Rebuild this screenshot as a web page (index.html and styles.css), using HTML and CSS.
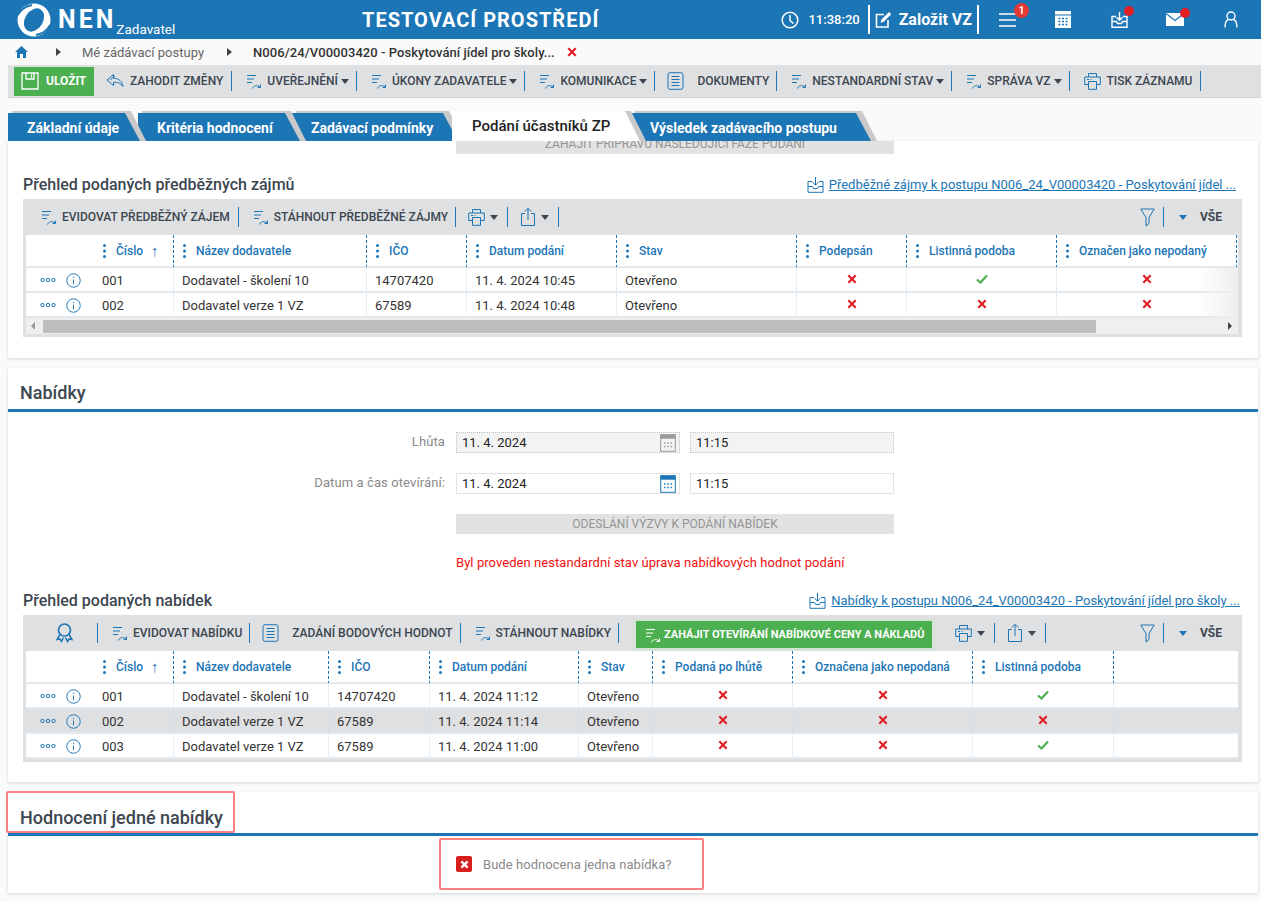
FILE: index.html
```html
<!DOCTYPE html>
<html lang="cs">
<head>
  <meta charset="UTF-8" />
  <meta name="viewport" content="width=device-width, initial-scale=1.0" />
  <title>NEN Zadavatel</title>
  <link rel="stylesheet" href="styles.css">
</head>
<body>
<svg class="defs" aria-hidden="true">
  <symbol id="i-process" viewBox="0 0 16 18"><path d="M1 3.500h9M1 7h7M1 10.500h5" fill="none" stroke="currentColor"/><path d="M6.500 16.500c.8-2.800 4.500-3.800 7.500-1.800M14.500 12.500v3h-3" fill="none" stroke="currentColor"/></symbol>
  <symbol id="i-print" viewBox="0 0 17 18"><path d="M4.500 5V1.500h8V5M4.500 12.500H.7V5h15.600v7.500h-3.800M4.500 9.500h8v7.800h-8z" fill="none" stroke="currentColor"/><path d="M3 7.500h2M6.500 7.500h1" stroke="currentColor"/></symbol>
  <symbol id="i-export" viewBox="0 0 16 20"><path d="M5 6.500H1.500v12h13v-12H11M8 13V1.500M4.800 4.500L8 1.300l3.200 3.200" fill="none" stroke="currentColor"/></symbol>
  <symbol id="i-filter" viewBox="0 0 15 19"><path d="M.7 1h13.600L9 9.500v5.800l-3 2.700V9.500z" fill="none" stroke="currentColor"/></symbol>
  <symbol id="i-doc" viewBox="0 0 17 18"><rect x="1" y=".7" width="15" height="16.600" rx="2" fill="none" stroke="currentColor"/><path d="M4.500 4.500h8M4.500 7.500h8M4.500 10.500h8M4.500 13.500h8" stroke="currentColor"/></symbol>
  <symbol id="i-undo" viewBox="0 0 18 16"><path d="M7.500 1.500L1 7l6.500 5.500V9.300c4-.4 7 .8 9.500 4.200-.6-5-4-8-9.500-8.300zM4 7l5-4.200" fill="none" stroke="currentColor"/></symbol>
  <symbol id="i-save" viewBox="0 0 18 18"><path d="M1 1h16v16H1zM5 1v6h8V1M10.500 2.500v3" fill="none" stroke="currentColor" stroke-width="1.300"/></symbol>
  <symbol id="i-award" viewBox="0 0 17 20"><circle cx="8.500" cy="7" r="6" fill="none" stroke="currentColor" stroke-width="1.700"/><path d="M4 11.500L1 16.500l3-.5 1.500 2.500 2-4M13 11.500l3 5-3-.5-1.500 2.500-2-4" fill="none" stroke="currentColor" stroke-width="1.500"/></symbol>
  <symbol id="i-kebab" viewBox="0 0 4 16"><circle cx="2" cy="2.500" r="1.500" fill="currentColor"/><circle cx="2" cy="8" r="1.500" fill="currentColor"/><circle cx="2" cy="13.500" r="1.500" fill="currentColor"/></symbol>
  <symbol id="i-more" viewBox="0 0 16 6"><g fill="none" stroke="currentColor"><circle cx="2.500" cy="3" r="1.700"/><circle cx="8" cy="3" r="1.700"/><circle cx="13.500" cy="3" r="1.700"/></g></symbol>
  <symbol id="i-info" viewBox="0 0 16 16"><circle cx="8" cy="8" r="7.200" fill="none" stroke="currentColor"/><path d="M8 7v5M8 4v1.500" stroke="currentColor"/></symbol>
  <symbol id="i-x" viewBox="0 0 10 10"><path d="M1.300 1.300l7.400 7.400M8.700 1.300L1.300 8.700" stroke="#e01e24" stroke-width="2.200"/></symbol>
  <symbol id="i-check" viewBox="0 0 12 10"><path d="M1 5.500l3.500 3L11 1.500" fill="none" stroke="#4caf50" stroke-width="2.200"/></symbol>
  <symbol id="i-cal" viewBox="0 0 16 18"><rect x=".7" y=".7" width="14.600" height="16.600" fill="none" stroke="currentColor"/><rect x=".7" y=".7" width="14.600" height="4" fill="currentColor"/><path d="M4 9h1.500M7.300 9h1.500M10.600 9h1.500M4 12.500h1.500M7.300 12.500h1.500M10.600 12.500h1.500" stroke="currentColor" stroke-width="1.500"/></symbol>
  <symbol id="i-inbox" viewBox="0 0 17 17"><path d="M5 5.500H1v10.800h15V5.500h-4M1 10.500h4.500l1 2h4l1-2H16M8.500 1v8M5.500 6.200l3 3 3-3" fill="none" stroke="currentColor"/></symbol>
</svg>

<header class="topbar">
  <div class="brand">
    <svg class="logo" viewBox="0 0 34 34"><circle cx="17" cy="17" r="16.500" fill="#fff"/><ellipse cx="17" cy="17" rx="9" ry="12.500" transform="rotate(32 17 17)" fill="#1c75b5"/><path d="M1 12c3-6 8-9 14-10M33 22c-3 6-8 9-14 10" fill="none" stroke="#1c75b5" stroke-width="1.800"/></svg>
    <span class="brand-name">NEN</span>
    <span class="brand-sub">Zadavatel</span>
  </div>
  <div class="env-title">TESTOVACÍ PROSTŘEDÍ</div>
  <div class="top-tools">
    <svg class="top-clock" viewBox="0 0 18 18"><circle cx="9" cy="9" r="7.800" fill="none" stroke="#fff" stroke-width="1.500"/><path d="M9 4v5.500l3.500 3" fill="none" stroke="#fff" stroke-width="1.500"/></svg>
    <span class="clock-time">11:38:20</span>
    <a class="new-order" href="#">
      <svg viewBox="0 0 17 17"><path d="M13 9v7H1.500V3.500H9" fill="none" stroke="#fff" stroke-width="1.600"/><path d="M5.500 11.800l1-3.300L14 1l2.200 2.200-7.500 7.500z" fill="#fff"/></svg>
      Založit VZ
    </a>
    <span class="top-icon top-menu">
      <svg viewBox="0 0 18 16"><path d="M0 2h17M0 8h17M0 14h17" stroke="#fff" stroke-width="1.700"/></svg>
      <b class="badge">1</b>
    </span>
    <span class="top-icon top-cal">
      <svg viewBox="0 0 16 17"><path d="M0 0h16v17H0z" fill="#fff"/><path d="M0 4h16" stroke="#1c75b5"/><path d="M3.500 7.500h2M7 7.500h2M10.500 7.500h2M3.500 10.500h2M7 10.500h2M10.500 10.500h2M3.500 13.500h2M7 13.500h2M10.500 13.500h2" stroke="#1c75b5" stroke-width="1.600"/></svg>
    </span>
    <span class="top-icon top-inbox">
      <svg><use href="#i-inbox"/></svg>
      <b class="dot"></b>
    </span>
    <span class="top-icon top-mail">
      <svg viewBox="0 0 18 13"><path d="M0 0h18v13H0z" fill="#fff"/><path d="M0 .5l9 7 9-7" fill="none" stroke="#1c75b5" stroke-width="1.200"/></svg>
      <b class="dot"></b>
    </span>
    <span class="top-icon top-user">
      <svg viewBox="0 0 14 17"><circle cx="7" cy="5" r="4" fill="none" stroke="#fff" stroke-width="1.400"/><path d="M1 16.500c0-5 2-7.500 3.500-8M13 16.500c0-5-2-7.500-3.500-8" fill="none" stroke="#fff" stroke-width="1.400"/></svg>
    </span>
  </div>
</header>

<nav class="crumbs">
  <svg class="home" viewBox="0 0 13 12"><path d="M6.500 0L13 6h-2v6H8V8H5v4H2V6H0z" fill="#1c75b5"/></svg>
  <span class="crumb-arrow"></span>
  <span class="crumb">Mé zádávací postupy</span>
  <span class="crumb-arrow"></span>
  <span class="crumb crumb-current">N006/24/V00003420 - Poskytování jídel pro školy...</span>
  <svg class="crumb-close"><use href="#i-x"/></svg>
</nav>

<div class="toolbar">
  <button class="btn-save"><svg><use href="#i-save"/></svg>ULOŽIT</button>
  <span class="tool tool-undo"><svg class="ic-undo"><use href="#i-undo"/></svg>ZAHODIT ZMĚNY</span><i class="sep"></i>
  <span class="tool"><svg class="ic-process"><use href="#i-process"/></svg>UVEŘEJNĚNÍ<i class="caret"></i></span><i class="sep"></i>
  <span class="tool"><svg class="ic-process"><use href="#i-process"/></svg>ÚKONY ZADAVATELE<i class="caret"></i></span><i class="sep"></i>
  <span class="tool"><svg class="ic-process"><use href="#i-process"/></svg>KOMUNIKACE<i class="caret"></i></span><i class="sep"></i>
  <span class="tool tool-doc"><svg class="ic-doc"><use href="#i-doc"/></svg>DOKUMENTY</span><i class="sep"></i>
  <span class="tool"><svg class="ic-process"><use href="#i-process"/></svg>NESTANDARDNÍ STAV<i class="caret"></i></span><i class="sep"></i>
  <span class="tool"><svg class="ic-process"><use href="#i-process"/></svg>SPRÁVA VZ<i class="caret"></i></span><i class="sep"></i>
  <span class="tool tool-print"><svg class="ic-print"><use href="#i-print"/></svg>TISK ZÁZNAMU</span><i class="sep"></i>
</div>

<div class="tabs">
  <a class="tab tab-1" href="#"><span>Základní údaje</span></a>
  <a class="tab tab-2" href="#"><span>Kritéria hodnocení</span></a>
  <a class="tab tab-3" href="#"><span>Zadávací podmínky</span></a>
  <a class="tab tab-active" href="#"><span>Podání účastníků ZP</span></a>
  <a class="tab tab-5" href="#"><span>Výsledek zadávacího postupu</span></a>
</div>

<main>
  <section class="panel panel-first">
    <div class="clip-row"><div class="btn-disabled">ZAHÁJIT PŘÍPRAVU NÁSLEDUJÍCÍ FÁZE PODÁNÍ</div></div>
    <div class="sub-head">
      <h3>Přehled podaných předběžných zájmů</h3>
      <a class="file-link" href="#"><svg><use href="#i-inbox"/></svg>Předběžné zájmy k postupu N006_24_V00003420 - Poskytování jídel ...</a>
    </div>
    <div class="grid">
      <div class="grid-tools">
        <span class="tool tool-first"><svg class="ic-process"><use href="#i-process"/></svg>EVIDOVAT PŘEDBĚŽNÝ ZÁJEM</span><i class="sep"></i>
        <span class="tool"><svg class="ic-process"><use href="#i-process"/></svg>STÁHNOUT PŘEDBĚŽNÉ ZÁJMY</span><i class="sep"></i>
        <span class="tool tool-mini"><svg class="ic-print"><use href="#i-print"/></svg><i class="caret"></i></span><i class="sep"></i>
        <span class="tool tool-mini"><svg class="ic-export"><use href="#i-export"/></svg><i class="caret"></i></span><i class="sep"></i>
        <span class="grid-right">
          <svg class="ic-filter"><use href="#i-filter"/></svg><i class="sep"></i>
          <i class="caret caret-blue"></i><b>VŠE</b>
        </span>
      </div>
      <div class="table-fade">
        <table class="data data-a">
          <colgroup><col><col><col><col><col><col><col><col><col><col></colgroup>
          <thead><tr>
            <th></th>
            <th><span class="th"><svg><use href="#i-kebab"/></svg>Číslo<em>↑</em></span></th>
            <th><span class="th"><svg><use href="#i-kebab"/></svg>Název dodavatele</span></th>
            <th><span class="th"><svg><use href="#i-kebab"/></svg>IČO</span></th>
            <th><span class="th"><svg><use href="#i-kebab"/></svg>Datum podání</span></th>
            <th><span class="th"><svg><use href="#i-kebab"/></svg>Stav</span></th>
            <th><span class="th"><svg><use href="#i-kebab"/></svg>Podepsán</span></th>
            <th><span class="th"><svg><use href="#i-kebab"/></svg>Listinná podoba</span></th>
            <th><span class="th"><svg><use href="#i-kebab"/></svg>Označen jako nepodaný</span></th>
            <th class="th-end"></th>
          </tr></thead>
          <tbody>
            <tr>
              <td class="acts"><svg class="ic-more"><use href="#i-more"/></svg><svg class="ic-info"><use href="#i-info"/></svg></td>
              <td>001</td><td>Dodavatel - školení 10</td><td>14707420</td><td>11. 4. 2024 10:45</td><td>Otevřeno</td>
              <td class="flag"><svg class="ic-x"><use href="#i-x"/></svg></td>
              <td class="flag"><svg class="ic-check"><use href="#i-check"/></svg></td>
              <td class="flag"><svg class="ic-x"><use href="#i-x"/></svg></td>
              <td></td>
            </tr>
            <tr>
              <td class="acts"><svg class="ic-more"><use href="#i-more"/></svg><svg class="ic-info"><use href="#i-info"/></svg></td>
              <td>002</td><td>Dodavatel verze 1 VZ</td><td>67589</td><td>11. 4. 2024 10:48</td><td>Otevřeno</td>
              <td class="flag"><svg class="ic-x"><use href="#i-x"/></svg></td>
              <td class="flag"><svg class="ic-x"><use href="#i-x"/></svg></td>
              <td class="flag"><svg class="ic-x"><use href="#i-x"/></svg></td>
              <td></td>
            </tr>
          </tbody>
        </table>
      </div>
      <div class="hscroll">
        <i class="arrow-left"></i>
        <div class="hscroll-thumb"></div>
        <i class="arrow-right"></i>
      </div>
    </div>
  </section>

  <section class="panel panel-offers">
    <h2 class="panel-title">Nabídky</h2>
    <div class="form">
      <div class="form-row">
        <label>Lhůta</label>
        <div class="field field-date is-readonly"><span>11. 4. 2024</span><svg class="ic-cal"><use href="#i-cal"/></svg></div>
        <div class="field field-time is-readonly"><span>11:15</span></div>
      </div>
      <div class="form-row">
        <label>Datum a čas otevírání:</label>
        <div class="field field-date"><span>11. 4. 2024</span><svg class="ic-cal"><use href="#i-cal"/></svg></div>
        <div class="field field-time"><span>11:15</span></div>
      </div>
      <div class="btn-disabled btn-send">ODESLÁNÍ VÝZVY K PODÁNÍ NABÍDEK</div>
      <p class="form-error">Byl proveden nestandardní stav úprava nabídkových hodnot podání</p>
    </div>
    <div class="sub-head sub-head-offers">
      <h3>Přehled podaných nabídek</h3>
      <a class="file-link" href="#"><svg><use href="#i-inbox"/></svg>Nabídky k postupu N006_24_V00003420 - Poskytování jídel pro školy ...</a>
    </div>
    <div class="grid grid-offers">
      <div class="grid-tools">
        <span class="tool tool-award"><svg class="ic-award"><use href="#i-award"/></svg></span><i class="sep"></i>
        <span class="tool"><svg class="ic-process"><use href="#i-process"/></svg>EVIDOVAT NABÍDKU</span><i class="sep"></i>
        <span class="tool tool-doc"><svg class="ic-doc"><use href="#i-doc"/></svg>ZADÁNÍ BODOVÝCH HODNOT</span><i class="sep"></i>
        <span class="tool"><svg class="ic-process"><use href="#i-process"/></svg>STÁHNOUT NABÍDKY</span><i class="sep"></i>
        <button class="btn-go"><svg class="ic-process"><use href="#i-process"/></svg>ZAHÁJIT OTEVÍRÁNÍ NABÍDKOVÉ CENY A NÁKLADŮ</button>
        <span class="tool tool-mini tool-after-go"><svg class="ic-print"><use href="#i-print"/></svg><i class="caret"></i></span><i class="sep"></i>
        <span class="tool tool-mini"><svg class="ic-export"><use href="#i-export"/></svg><i class="caret"></i></span><i class="sep"></i>
        <span class="grid-right">
          <svg class="ic-filter"><use href="#i-filter"/></svg><i class="sep"></i>
          <i class="caret caret-blue"></i><b>VŠE</b>
        </span>
      </div>
      <table class="data data-b">
        <colgroup><col><col><col><col><col><col><col><col><col><col></colgroup>
        <thead><tr>
          <th></th>
          <th><span class="th"><svg><use href="#i-kebab"/></svg>Číslo<em>↑</em></span></th>
          <th><span class="th"><svg><use href="#i-kebab"/></svg>Název dodavatele</span></th>
          <th><span class="th"><svg><use href="#i-kebab"/></svg>IČO</span></th>
          <th><span class="th"><svg><use href="#i-kebab"/></svg>Datum podání</span></th>
          <th><span class="th"><svg><use href="#i-kebab"/></svg>Stav</span></th>
          <th><span class="th"><svg><use href="#i-kebab"/></svg>Podaná po lhůtě</span></th>
          <th><span class="th"><svg><use href="#i-kebab"/></svg>Označena jako nepodaná</span></th>
          <th><span class="th"><svg><use href="#i-kebab"/></svg>Listinná podoba</span></th>
          <th class="th-end"></th>
        </tr></thead>
        <tbody>
          <tr>
            <td class="acts"><svg class="ic-more"><use href="#i-more"/></svg><svg class="ic-info"><use href="#i-info"/></svg></td>
            <td>001</td><td>Dodavatel - školení 10</td><td>14707420</td><td>11. 4. 2024 11:12</td><td>Otevřeno</td>
            <td class="flag"><svg class="ic-x"><use href="#i-x"/></svg></td>
            <td class="flag"><svg class="ic-x"><use href="#i-x"/></svg></td>
            <td class="flag"><svg class="ic-check"><use href="#i-check"/></svg></td>
            <td></td>
          </tr>
          <tr class="selected">
            <td class="acts"><svg class="ic-more"><use href="#i-more"/></svg><svg class="ic-info"><use href="#i-info"/></svg></td>
            <td>002</td><td>Dodavatel verze 1 VZ</td><td>67589</td><td>11. 4. 2024 11:14</td><td>Otevřeno</td>
            <td class="flag"><svg class="ic-x"><use href="#i-x"/></svg></td>
            <td class="flag"><svg class="ic-x"><use href="#i-x"/></svg></td>
            <td class="flag"><svg class="ic-x"><use href="#i-x"/></svg></td>
            <td></td>
          </tr>
          <tr>
            <td class="acts"><svg class="ic-more"><use href="#i-more"/></svg><svg class="ic-info"><use href="#i-info"/></svg></td>
            <td>003</td><td>Dodavatel verze 1 VZ</td><td>67589</td><td>11. 4. 2024 11:00</td><td>Otevřeno</td>
            <td class="flag"><svg class="ic-x"><use href="#i-x"/></svg></td>
            <td class="flag"><svg class="ic-x"><use href="#i-x"/></svg></td>
            <td class="flag"><svg class="ic-check"><use href="#i-check"/></svg></td>
            <td></td>
          </tr>
        </tbody>
      </table>
    </div>
  </section>

  <section class="panel panel-single">
    <h2 class="panel-title"><span class="marked marked-title">Hodnocení jedné nabídky</span></h2>
    <div class="single-row">
      <div class="marked marked-check">
        <span class="check-off"><svg viewBox="0 0 10 10"><path d="M1.500 1.500l7 7M8.500 1.500l-7 7" stroke="#fff" stroke-width="2.600"/></svg></span>
        Bude hodnocena jedna nabídka?
      </div>
    </div>
  </section>
</main>
</body>
</html>
```

FILE: styles.css
```css
:root {
  --blue: #1c75b5;
  --bar: #dfe0e2;
  --text: #3c4650;
  --green: #4caf50;
}

* {
  box-sizing: border-box;
}

html, body {
  margin: 0;
  height: 902px;
  overflow: hidden;
}

body {
  font-family: Roboto, "Liberation Sans", sans-serif;
  font-size: 13px;
  color: #333;
  background-color: #fafafa;
}

a {
  color: var(--blue);
}

i, em {
  font-style: normal;
}

svg {
  display: block;
  flex: none;
}

.defs {
  position: absolute;
  width: 0;
  height: 0;
}

/* top bar */
.topbar {
  height: 39px;
  background-color: var(--blue);
  color: #fff;
  display: flex;
  align-items: center;
}

.brand {
  width: 362px;
  padding-left: 17px;
  display: flex;
  align-items: center;
}

.logo {
  width: 34px;
  height: 34px;
}

.brand-name {
  margin-left: 7px;
  font-size: 25px;
  font-weight: 700;
  letter-spacing: 3px;
}

.brand-sub {
  margin: 18px 0 0 0;
  font-size: 13.500px;
}

.env-title {
  font-size: 20px;
  font-weight: 700;
  letter-spacing: 1px;
}

.top-tools {
  margin-left: auto;
  display: flex;
  align-items: center;
}

.top-clock {
  width: 18px;
  height: 18px;
}

.clock-time {
  margin-left: 9px;
  font-size: 13px;
  font-weight: 500;
}

.new-order {
  margin-left: 8px;
  height: 29px;
  padding: 0 5px 0 5px;
  display: flex;
  align-items: center;
  gap: 7px;
  border-left: 2px solid #fff;
  border-right: 2px solid #fff;
  color: #fff;
  font-size: 16px;
  font-weight: 700;
  text-decoration: none;
}

.new-order svg {
  width: 17px;
  height: 17px;
}

.top-icon {
  position: relative;
  display: block;
}

.top-menu {
  margin-left: 20px;
}

.top-menu svg {
  width: 18px;
  height: 16px;
}

.top-cal {
  margin-left: 38px;
}

.top-cal svg {
  width: 16px;
  height: 17px;
}

.top-inbox {
  margin-left: 40px;
  color: #fff;
  stroke-width: 1.400px;
}

.top-inbox svg {
  width: 17px;
  height: 17px;
}

.top-mail {
  margin-left: 38px;
}

.top-mail svg {
  width: 18px;
  height: 13px;
}

.top-user {
  margin: 0 23px 0 40px;
}

.top-user svg {
  width: 14px;
  height: 17px;
}

.badge {
  position: absolute;
  top: -9px;
  left: 15px;
  width: 15px;
  height: 15px;
  border-radius: 50%;
  background-color: #e53935;
  font-size: 10px;
  line-height: 15px;
  text-align: center;
}

.dot {
  position: absolute;
  top: -5px;
  right: -6px;
  width: 10px;
  height: 10px;
  border-radius: 50%;
  background-color: #e01e24;
}

/* breadcrumb */
.crumbs {
  height: 26px;
  padding-left: 15px;
  display: flex;
  align-items: center;
}

.home {
  width: 13px;
  height: 12px;
}

.crumb-arrow {
  margin: 0 21px 0 28px;
  border-left: 5px solid #444;
  border-top: 4px solid transparent;
  border-bottom: 4px solid transparent;
}

.crumb + .crumb-arrow {
  margin-left: 23px;
}

.crumb {
  color: #666;
  font-size: 13px;
}

.crumb-current {
  color: #333;
  font-weight: 500;
  letter-spacing: .05px;
}

.crumb-close {
  margin-left: 12px;
  width: 10px;
  height: 10px;
}

/* toolbars */
.toolbar {
  margin-left: 8px;
  height: 33px;
  padding-left: 6px;
  background-color: var(--bar);
  border-bottom: 1px solid #d2d3d5;
  display: flex;
  align-items: center;
}

.btn-save {
  width: 80px;
  height: 29px;
  border: 0;
  padding: 0 0 0 7px;
  background-color: var(--green);
  color: #fff;
  font-family: inherit;
  font-size: 12px;
  font-weight: 700;
  display: flex;
  align-items: center;
  gap: 7px;
}

.btn-save svg {
  width: 18px;
  height: 18px;
}

.tool {
  padding: 0 7px 0 14px;
  display: flex;
  align-items: center;
  gap: 5px;
  color: var(--text);
  font-size: 12px;
  font-weight: 500;
  white-space: nowrap;
}

.tool-undo {
  padding: 0 8px 0 12px;
  gap: 6px;
}

.tool-doc {
  padding-left: 12px;
  gap: 13px;
}

.tool-print {
  padding-right: 8px;
  gap: 6px;
}

.tool-first {
  padding: 0 8px 0 18px;
}

.tool-mini {
  padding: 0 9px 0 12px;
}

.tool-award {
  padding: 0 24px 0 33px;
}

.tool-after-go {
  padding-left: 23px;
}

.sep {
  width: 1px;
  height: 20px;
  background-color: var(--blue);
  flex: none;
}

.caret {
  width: 0;
  height: 0;
  margin-left: -2px;
  border-left: 4px solid transparent;
  border-right: 4px solid transparent;
  border-top: 5px solid var(--text);
}

.tool-mini .caret {
  margin-left: 0;
}

.caret-blue {
  margin: 0 13px 0 15px;
  border-top-color: var(--blue);
}

.ic-process {
  width: 16px;
  height: 18px;
  color: var(--blue);
}

.ic-undo {
  width: 18px;
  height: 16px;
  color: var(--blue);
}

.ic-doc {
  width: 17px;
  height: 18px;
  color: var(--blue);
}

.ic-print {
  width: 17px;
  height: 18px;
  color: var(--blue);
}

.ic-export {
  width: 16px;
  height: 20px;
  color: var(--blue);
}

.ic-award {
  width: 17px;
  height: 20px;
  color: var(--blue);
}

.ic-filter {
  width: 15px;
  height: 19px;
  color: var(--blue);
  margin-right: 8px;
}

/* tabs */
.tabs {
  margin-top: 13px;
  height: 30px;
  padding-left: 8px;
  display: flex;
  align-items: flex-end;
}

.tab {
  position: relative;
  height: 28px;
  padding: 1px 21px 0 19px;
  display: flex;
  align-items: center;
  color: #fff;
  font-size: 14px;
  font-weight: 700;
  text-decoration: none;
  white-space: nowrap;
}

.tab::before, .tab::after {
  content: "";
  position: absolute;
  top: 0;
  bottom: 0;
  left: 0;
  right: 0;
  clip-path: polygon(0 0, calc(100% - 15px) 0, 100% 100%, 0 100%);
}

.tab::before {
  top: -2px;
  left: 4px;
  right: -6px;
  background-color: #c9c9c9;
}

.tab::after {
  background-color: var(--blue);
}

.tab span {
  position: relative;
  z-index: 1;
}

.tab-1 {
  z-index: 4;
  width: 132px;
}

.tab-2 {
  z-index: 3;
  margin-left: -2px;
  width: 162px;
}

.tab-3 {
  z-index: 2;
  margin-left: -8px;
  width: 166px;
}

.tab-active {
  z-index: 5;
  margin-left: -6px;
  height: 30px;
  width: 188px;
  padding: 0 21px 0 20px;
  color: #222;
  font-weight: 500;
  font-size: 15px;
}

.tab-active::before {
  top: 0;
}

.tab-active::after {
  background-color: #fff;
}

.tab-5 {
  z-index: 1;
  margin-left: -9px;
  width: 240px;
  padding-left: 19px;
}

/* panels */
main {
  display: flex;
  flex-direction: column;
  gap: 10px;
}

.panel {
  margin: 0 3px 0 8px;
  background-color: #fff;
  box-shadow: 0 1px 3px rgba(0, 0, 0, .15);
}

.panel-first {
  height: 217px;
}

.panel-offers {
  height: 414px;
}

.panel-single {
  height: 101px;
}

.clip-row {
  height: 13px;
  padding-left: 448px;
  overflow: hidden;
  display: flex;
  align-items: flex-end;
}

.btn-disabled {
  width: 438px;
  height: 20px;
  flex: none;
  background-color: #e2e2e2;
  color: #959595;
  font-size: 12px;
  line-height: 21px;
  text-align: center;
}

.sub-head {
  margin-top: 18px;
  height: 25px;
  padding: 0 22px 0 15px;
  display: flex;
  justify-content: space-between;
  align-items: center;
}

.sub-head h3 {
  margin: 0;
  color: var(--text);
  font-size: 16px;
  font-weight: 500;
}

.file-link {
  display: flex;
  align-items: center;
  gap: 5px;
  font-size: 13px;
}

.file-link svg {
  width: 17px;
  height: 17px;
}

.grid {
  position: relative;
  margin: 2px 0 0 15px;
  width: 1219px;
  height: 138px;
  padding: 0 4px 4px 3px;
  background-color: var(--bar);
}

.grid-offers {
  height: 147px;
}

.grid-tools {
  height: 36px;
  margin-left: -3px;
  margin-right: -4px;
  display: flex;
  align-items: center;
}

.grid-right {
  margin-left: auto;
  padding-right: 20px;
  display: flex;
  align-items: center;
  color: var(--text);
  font-size: 12px;
}

.btn-go {
  margin: 3px 0 0 17px;
  height: 27px;
  width: 296px;
  padding: 0 0 0 9px;
  border: 0;
  outline: 2px solid #d4e4d4;
  background-color: var(--green);
  color: #fff;
  font-family: inherit;
  font-size: 11px;
  font-weight: 700;
  white-space: nowrap;
  display: flex;
  align-items: center;
  gap: 3px;
}

.btn-go .ic-process {
  color: #fff;
}

/* tables */
.table-fade {
  position: relative;
}

.table-fade::after {
  content: "";
  position: absolute;
  top: 33px;
  right: 0;
  bottom: 0;
  width: 40px;
  background: linear-gradient(to right, rgba(238, 238, 238, 0), #eee);
}

.data {
  width: 1212px;
  table-layout: fixed;
  border-collapse: separate;
  border-spacing: 0;
  background-color: #fff;
}

.data-a col:nth-child(1), .data-b col:nth-child(1) { width: 68px; }
.data-a col:nth-child(2), .data-b col:nth-child(2) { width: 80px; }
.data-a col:nth-child(3) { width: 193px; }
.data-a col:nth-child(4) { width: 100px; }
.data-a col:nth-child(5) { width: 150px; }
.data-a col:nth-child(6) { width: 180px; }
.data-a col:nth-child(7) { width: 110px; }
.data-a col:nth-child(8) { width: 150px; }
.data-a col:nth-child(9) { width: 180px; }
.data-a col:nth-child(10) { width: 1px; }
.data-b col:nth-child(3) { width: 155px; }
.data-b col:nth-child(4) { width: 101px; }
.data-b col:nth-child(5) { width: 149px; }
.data-b col:nth-child(6) { width: 74px; }
.data-b col:nth-child(7) { width: 140px; }
.data-b col:nth-child(8) { width: 180px; }
.data-b col:nth-child(9) { width: 141px; }
.data-b col:nth-child(10) { width: 124px; }

.data th {
  height: 33px;
  padding: 0;
  border-right: 1px dashed var(--blue);
  border-bottom: 2px solid #e3eaef;
  color: var(--blue);
  font-size: 12px;
  font-weight: 500;
  text-align: left;
}

.data th:first-child, .data th.th-end {
  border-right: 0;
}

.th {
  padding-left: 8px;
  display: flex;
  align-items: center;
  gap: 9px;
  white-space: nowrap;
}

.th svg {
  width: 5px;
  height: 16px;
  color: var(--blue);
}

.th em {
  margin-left: -1px;
  font-size: 15px;
  font-weight: 400;
}

.data td {
  height: 25px;
  padding: 2px 0 0 8px;
  border-right: 1px dotted #d5dfe6;
  border-bottom: 2px solid #e3eaef;
  font-size: 13px;
  white-space: nowrap;
  overflow: hidden;
}

.data td:first-child {
  border-right: 0;
}

.data td:last-child {
  border-right: 0;
}

.data td.acts {
  padding: 0 0 0 14px;
}

.acts svg {
  display: inline-block;
  vertical-align: middle;
}

.ic-more {
  width: 16px;
  height: 6px;
  color: var(--blue);
  margin-right: 10px;
}

.ic-info {
  width: 15px;
  height: 15px;
  color: var(--blue);
}

.data td.flag {
  padding: 0 0 1px;
}

.ic-x {
  width: 10px;
  height: 10px;
  margin: 0 auto;
}

.ic-check {
  width: 12px;
  height: 10px;
  margin: 0 auto;
}

.selected td {
  background-color: var(--bar);
}

.hscroll {
  height: 16px;
  margin-top: 0;
  padding: 2px 0;
  background-color: #efefef;
  display: flex;
  align-items: center;
}

.hscroll-thumb {
  width: 1053px;
  height: 13px;
  margin-left: 8px;
  background-color: #bdbdbd;
}

.arrow-left {
  margin-left: 5px;
  border-right: 4px solid #999;
  border-top: 4px solid transparent;
  border-bottom: 4px solid transparent;
}

.arrow-right {
  margin-left: auto;
  margin-right: 6px;
  border-left: 4px solid #444;
  border-top: 4px solid transparent;
  border-bottom: 4px solid transparent;
}

/* sections with a title */
.panel-title {
  margin: 0;
  height: 44px;
  padding: 14px 0 0 12px;
  border-bottom: 3px solid var(--blue);
  color: var(--text);
  font-size: 18px;
  font-weight: 500;
  line-height: 22px;
}

.form {
  padding-top: 20px;
}

.form-row {
  height: 21px;
  margin-bottom: 20px;
  display: flex;
  align-items: center;
}

.form-row label {
  width: 437px;
  margin-top: -2px;
  color: #8a8a8a;
  font-size: 13px;
  letter-spacing: .1px;
  text-align: right;
}

.field {
  height: 21px;
  border: 1px solid #e2e2e2;
  font-size: 13px;
  line-height: 19px;
  color: #222;
  display: flex;
  align-items: center;
}

.field span {
  padding-left: 5px;
  flex: 1;
}

.field-date {
  margin-left: 11px;
  width: 224px;
}

.field-time {
  margin-left: 10px;
  width: 204px;
}

.is-readonly {
  border: 1px dotted #c4c4c4;
  background-color: #f3f3f3;
}

.ic-cal {
  width: 16px;
  height: 18px;
  margin: 0 3px 0 2px;
  color: var(--blue);
}

.is-readonly .ic-cal {
  color: #9a9a9a;
}

.btn-send {
  margin-left: 448px;
}

.form-error {
  margin: 20px 0 0 448px;
  height: 18px;
  color: #f01010;
  font-size: 13px;
  letter-spacing: .06px;
  line-height: 18px;
}

.sub-head-offers {
  margin-top: 16px;
  padding-right: 18px;
}

.sub-head-offers .file-link {
  letter-spacing: -.03px;
}

/* red marks */
.marked {
  border: 2px solid #ff8080;
  border-radius: 2px;
}

.marked-title {
  position: absolute;
  margin: -15px 0 0 -14px;
  width: 229px;
  height: 42px;
  padding: 14px 0 0 12px;
}

.panel-single .panel-title {
  position: relative;
}

.single-row {
  padding: 2px 0 0 431px;
}

.marked-check {
  width: 265px;
  height: 52px;
  padding-left: 15px;
  display: flex;
  align-items: center;
  gap: 11px;
  color: #8a8a8a;
  font-size: 13px;
  letter-spacing: .05px;
}

.check-off {
  width: 16px;
  height: 16px;
  border-radius: 2px;
  background-color: #d81e1e;
  display: flex;
  align-items: center;
  justify-content: center;
}

.check-off svg {
  width: 9px;
  height: 9px;
}
```
